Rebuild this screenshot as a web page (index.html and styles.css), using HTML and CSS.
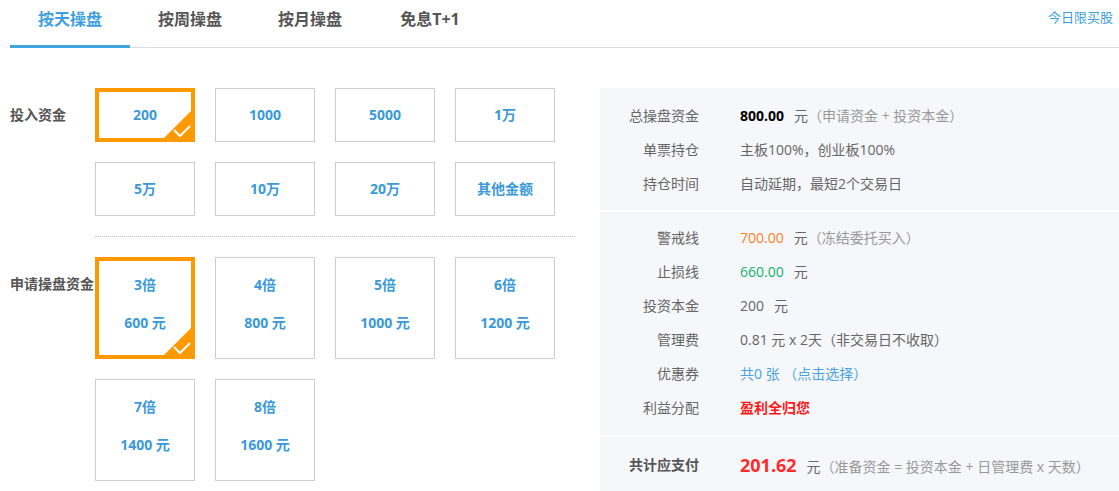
FILE: index.html
```html
<!DOCTYPE html>
<html lang="zh-CN">
<head>
<meta charset="utf-8">
<title>按天操盘</title>
<link rel="stylesheet" href="styles.css">
</head>
<body>
<div class="tabbar">
  <div class="tabs">
    <div class="tab active">按天操盘</div>
    <div class="tab">按周操盘</div>
    <div class="tab">按月操盘</div>
    <div class="tab">免息T+1</div>
  </div>
  <a class="today">今日限买股</a>
</div>

<div class="main">
  <div class="left">
    <div class="group">
      <div class="glabel">投入资金</div>
      <div class="grid">
        <div class="opt small selected">200<span class="tick"><svg width="35" height="35" viewBox="0 0 35 35"><polygon points="35,0 35,35 0,35" fill="#ff9900"/><polyline points="14,23 20,29 30,19" fill="none" stroke="#fff" stroke-width="2"/></svg></span></div>
        <div class="opt small">1000</div>
        <div class="opt small">5000</div>
        <div class="opt small">1万</div>
        <div class="opt small">5万</div>
        <div class="opt small">10万</div>
        <div class="opt small">20万</div>
        <div class="opt small">其他金额</div>
      </div>
    </div>
    <div class="sep"></div>
    <div class="group">
      <div class="glabel">申请操盘资金</div>
      <div class="grid">
        <div class="opt tall selected"><span>3倍</span><span>600 元</span><span class="tick"><svg width="35" height="35" viewBox="0 0 35 35"><polygon points="35,0 35,35 0,35" fill="#ff9900"/><polyline points="14,23 20,29 30,19" fill="none" stroke="#fff" stroke-width="2"/></svg></span></div>
        <div class="opt tall"><span>4倍</span><span>800 元</span></div>
        <div class="opt tall"><span>5倍</span><span>1000 元</span></div>
        <div class="opt tall"><span>6倍</span><span>1200 元</span></div>
        <div class="opt tall"><span>7倍</span><span>1400 元</span></div>
        <div class="opt tall"><span>8倍</span><span>1600 元</span></div>
      </div>
    </div>
  </div>

  <div class="panel">
    <div class="section s1">
      <div class="row"><div class="label">总操盘资金</div><div class="value"><b class="black">800.00</b><span class="unit">元</span><span class="note">（申请资金 + 投资本金）</span></div></div>
      <div class="row"><div class="label">单票持仓</div><div class="value">主板100%，创业板100%</div></div>
      <div class="row"><div class="label">持仓时间</div><div class="value">自动延期，最短2个交易日</div></div>
    </div>
    <div class="section s2">
      <div class="row"><div class="label">警戒线</div><div class="value"><span class="orange">700.00</span><span class="unit">元</span><span class="note">（冻结委托买入）</span></div></div>
      <div class="row"><div class="label">止损线</div><div class="value"><span class="green">660.00</span><span class="unit">元</span></div></div>
      <div class="row"><div class="label">投资本金</div><div class="value">200<span class="unit">元</span></div></div>
      <div class="row"><div class="label">管理费</div><div class="value">0.81 元 x 2天（非交易日不收取）</div></div>
      <div class="row"><div class="label">优惠券</div><div class="value blue">共0 张 （点击选择）</div></div>
      <div class="row"><div class="label">利益分配</div><div class="value"><b class="red">盈利全归您</b></div></div>
    </div>
    <div class="section s3">
      <div class="row"><div class="label bold">共计应支付</div><div class="value"><b class="total">201.62</b><span class="unit">元</span><span class="note">（准备资金 = 投资本金 + 日管理费 x 天数）</span></div></div>
    </div>
  </div>
</div>
</body>
</html>
```

FILE: styles.css
```css
* { box-sizing: border-box; }
body {
  margin: 0;
  font-family: "Open Sans", "Noto Sans CJK SC", sans-serif;
  color: #666;
  background: #fff;
  overflow: hidden;
}

.tabbar {
  margin-left: 10px;
  height: 48px;
  border-bottom: 1px solid #ddd;
  display: flex;
  justify-content: space-between;
}
.tabs { display: flex; }
.tab {
  width: 120px;
  text-align: center;
  font-size: 16px;
  font-weight: bold;
  color: #555;
  line-height: 38px;
  height: 48px;
}
.tab.active {
  color: #3d9fe0;
  border-bottom: 3px solid #3da5e0;
  margin-bottom: -1px;
}
.today {
  font-size: 13px;
  color: #3d9fe0;
  line-height: 34px;
  margin-right: 6px;
}

.main {
  display: flex;
  margin-top: 40px;
  margin-left: 10px;
  gap: 25px;
}
.left { width: 565px; }
.group { display: flex; }
.glabel {
  width: 85px;
  font-size: 14px;
  font-weight: bold;
  color: #555;
  line-height: 54px;
  white-space: nowrap;
}
.grid {
  display: grid;
  grid-template-columns: repeat(4, 100px);
  column-gap: 20px;
  row-gap: 20px;
}
.opt {
  position: relative;
  border: 1px solid #ccc;
  color: #3a9ad9;
  font-size: 14px;
  font-weight: bold;
  text-align: center;
}
.opt.small { height: 54px; line-height: 52px; }
.opt.tall {
  height: 102px;
  display: flex;
  flex-direction: column;
  align-items: center;
  padding-top: 17px;
  gap: 18px;
  line-height: 20px;
}
.opt.selected { border: 4px solid #ff9900; }
.opt.small.selected { line-height: 46px; }
.opt.tall.selected { padding-top: 14px; }
.tick {
  position: absolute;
  right: -4px;
  bottom: -4px;
  width: 35px;
  height: 35px;
  line-height: 0;
}
.sep {
  margin: 20px 0 20px 85px;
  border-top: 1px dotted #bbb;
}

.panel {
  flex: 1;
  background: #f5f7fa;
  font-size: 14px;
}
.section { border-bottom: 2px solid #fff; }
.s1 { padding: 11px 0 9px; }
.s2 { padding: 9px 0 10px; }
.s3 { padding: 11px 0 20px; border-bottom: 0; }
.row { display: flex; line-height: 34px; }
.label {
  width: 99px;
  text-align: right;
  color: #666;
  white-space: nowrap;
}
.label.bold { font-weight: bold; color: #555; }
.value {
  margin-left: 41px;
  color: #666;
  white-space: nowrap;
}
.unit { margin-left: 10px; }
.note { color: #999; }
.black { color: #000; }
.orange { color: #ff7f1f; }
.green { color: #17b16b; }
.blue { color: #4aa3df; }
.red { color: #ff1a1a; }
.total { color: #ff2a2a; font-size: 18px; }
```
